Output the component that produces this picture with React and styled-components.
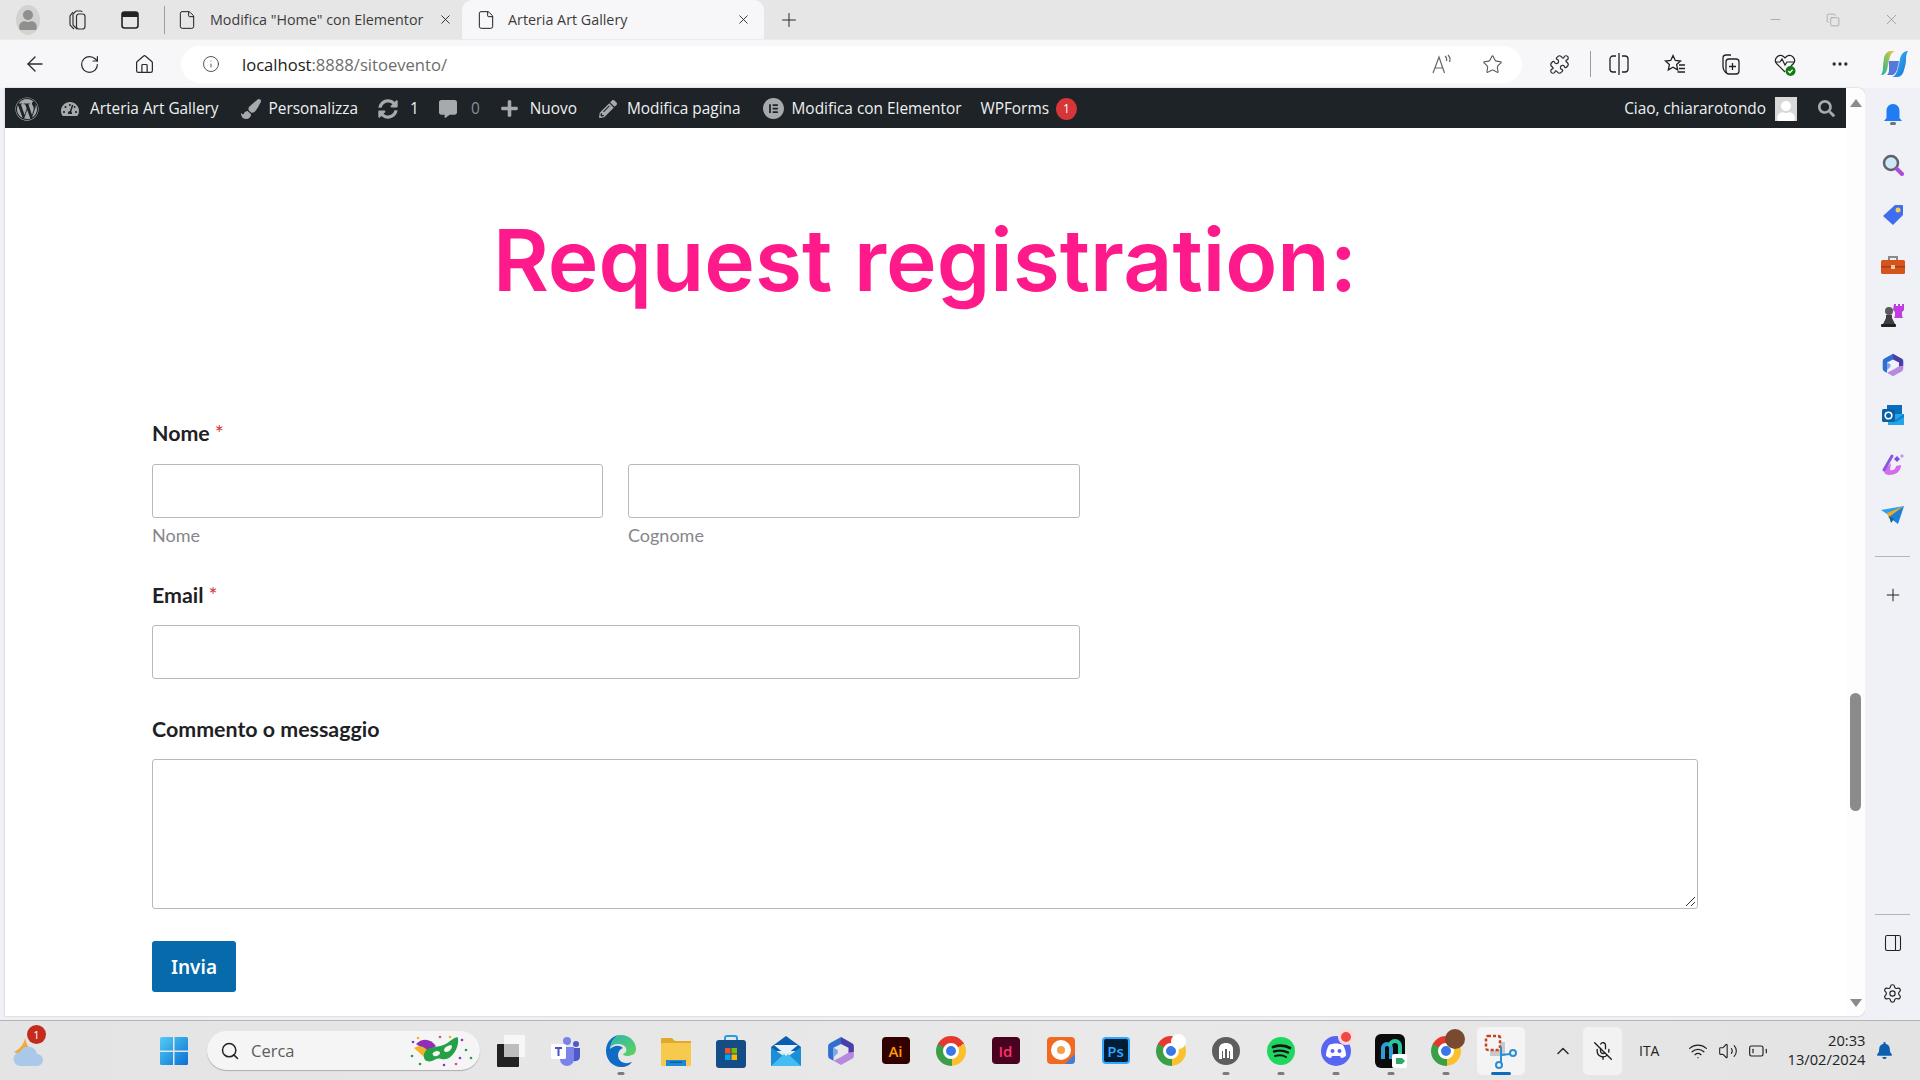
import React from "react";
import styled, { createGlobalStyle } from "styled-components";
import {
  ArrowLeft,
  RotateCw,
  House,
  Info,
  Star,
  Puzzle,
  Plus,
  X,
  File,
  Copy,
  PanelRight,
  Minus,
  Settings,
  MoreHorizontal,
  Search,
  ChevronUp,
  MicOff,
  Wifi,
  Volume2,
  BatteryLow,
} from "lucide-react";
import {
  FaWordpress,
  FaTachometerAlt,
  FaPaintBrush,
  FaSyncAlt,
  FaCommentAlt,
  FaPlus,
  FaPencilAlt,
  FaSearch,
  FaUser,
  FaBell,
} from "react-icons/fa";
import { SiElementor } from "react-icons/si";

const GlobalStyle = createGlobalStyle`
  html, body {
    margin: 0;
    height: 100%;
    overflow: hidden;
    background: #f0f1f6;
  }
`;

const Shell = styled.div`
  width: 1920px;
  height: 1080px;
  display: flex;
  flex-direction: column;
  font-family: "Open Sans", "Liberation Sans", sans-serif;
  color: #1f1f1f;
`;

const TabStrip = styled.div`
  height: 39px;
  flex: none;
  display: flex;
  align-items: center;
  padding-left: 8px;
  background: #e6e6e6;
`;

const Slot = styled.div`
  width: ${(p) => p.$w || 55}px;
  height: 100%;
  flex: none;
  display: flex;
  align-items: center;
  justify-content: center;
  color: ${(p) => p.$color || "#2b2b2b"};
`;

const WindowControls = styled.div`
  margin-left: auto;
  height: 100%;
  display: flex;
`;

const Avatar = styled.div`
  width: 24px;
  height: 30px;
  border-radius: 50%;
  background: #d2d2d0;
  display: flex;
  align-items: center;
  justify-content: center;
  color: #8f8f8d;
  overflow: hidden;
`;

const Sep = styled.div`
  width: 1px;
  height: ${(p) => p.$h || 28}px;
  background: #9c9c9c;
  flex: none;
  margin-left: ${(p) => p.$ml || 0}px;
`;

const Tab = styled.div`
  width: ${(p) => p.$w}px;
  height: 39px;
  flex: none;
  display: flex;
  align-items: center;
  box-sizing: border-box;
  padding: 0 ${(p) => p.$pr}px 0 ${(p) => p.$pl}px;
  gap: ${(p) => p.$gap}px;
  background: ${(p) => (p.$active ? "#f7f7f9" : "transparent")};
  border-radius: ${(p) => (p.$active ? "10px 10px 0 0" : "0")};

  svg {
    flex: none;
  }
`;

const TabTitle = styled.span`
  font-size: 14.3px;
  white-space: nowrap;
  color: #3c3c3c;
`;

const TabClose = styled.span`
  margin-left: auto;
  display: flex;
`;

const Toolbar = styled.div`
  height: 49px;
  flex: none;
  display: flex;
  align-items: center;
  padding-left: 7px;
  box-sizing: border-box;
  background: #f7f7f9;
  border-top: 1px solid #ececec;
`;

const AddressBar = styled.div`
  width: 1341px;
  height: 37px;
  flex: none;
  margin: 0 10px 0 9px;
  padding: 0 5px 0 21px;
  box-sizing: border-box;
  display: flex;
  align-items: center;
  border-radius: 19px;
  background: #fff;
`;

const Url = styled.span`
  font-size: 16.6px;
  color: #1b1b1b;
  flex: 1;
  margin-left: 22px;

  span {
    color: #6d6d6d;
  }
`;

const AddressAction = styled.div`
  width: 50px;
  display: flex;
  justify-content: center;
  color: #555;
`;

const Body = styled.div`
  flex: 1;
  min-height: 0;
  display: flex;
  background: #f0f1f6;
  padding-left: 5px;
`;

const Page = styled.div`
  width: 1860px;
  height: 928px;
  flex: none;
  display: flex;
  background: #fff;
  border-radius: 0 8px 8px 0;
  box-shadow: 0 0 2px rgba(0, 0, 0, 0.25);
  overflow: hidden;
`;

const PageColumn = styled.div`
  width: 1841px;
  flex: none;
  display: flex;
  flex-direction: column;
`;

const AdminBar = styled.div`
  height: 40px;
  flex: none;
  display: flex;
  align-items: center;
  box-sizing: border-box;
  padding: 1px 0 0 10px;
  background: #1d2327;
  color: #f0f0f1;
  font-size: 15.4px;
  white-space: nowrap;
`;

const AdminItem = styled.div`
  display: flex;
  align-items: center;
  gap: ${(p) => p.$gap || 10}px;
  margin-left: ${(p) => p.$ml || 0}px;

  svg {
    color: #a7aaad;
    flex: none;
  }
`;

const Muted = styled.span`
  color: #8c8f94;
`;

const AdminBadge = styled.span`
  width: 21px;
  height: 22px;
  border-radius: 50%;
  background: #d63638;
  color: #fff;
  font-size: 12px;
  display: flex;
  align-items: center;
  justify-content: center;
`;

const UserBox = styled.div`
  width: 22px;
  height: 24px;
  background: #d8d8d8;
  display: flex;
  align-items: flex-end;
  justify-content: center;
  overflow: hidden;

  svg {
    color: #fff;
  }
`;

const AdminRight = styled.div`
  margin-left: auto;
  display: flex;
  align-items: center;
  height: 100%;
  gap: 9px;
`;

const Content = styled.main`
  flex: 1;
  padding: 78px 148px 0 147px;
  font-family: Lato, "Liberation Sans", sans-serif;
`;

const Title = styled.h1`
  margin: 0 0 106px;
  text-align: center;
  font-family: Inter, "Noto Sans", sans-serif;
  font-size: 85.7px;
  line-height: 109px;
  font-weight: 600;
  color: #ff1a8c;
`;

const Field = styled.div`
  width: ${(p) => p.$w || 928}px;
  margin-bottom: ${(p) => p.$mb || 0}px;
`;

const Label = styled.div`
  font-size: 21.4px;
  line-height: 24px;
  font-weight: 700;
  color: #1f1f26;
  margin-bottom: 18px;

  em {
    font-style: normal;
    font-weight: 400;
    color: #d63637;
    margin-left: 5px;
  }
`;

const NameRow = styled.div`
  display: grid;
  grid-template-columns: 451px 452px;
  gap: 25px;
  margin-top: 19px;
`;

const TextInput = styled.div`
  height: 54px;
  box-sizing: border-box;
  border: 1px solid #b9b9b9;
  border-radius: 3px;
  background: #fff;
`;

const Sublabel = styled.div`
  font-size: 18px;
  line-height: 22px;
  margin-top: 6px;
  color: #86868c;
`;

const TextArea = styled.div`
  position: relative;
  height: 150px;
  box-sizing: border-box;
  border: 1px solid #b9b9b9;
  border-radius: 3px;
  margin-bottom: 32px;
`;

const Grip = styled.svg`
  position: absolute;
  right: 1px;
  bottom: 1px;
`;

const SubmitButton = styled.button`
  width: 84px;
  height: 51px;
  border: none;
  border-radius: 3px;
  background: #066aab;
  color: #fff;
  font-family: "Noto Sans", Lato, sans-serif;
  font-size: 19px;
  font-weight: 600;
  padding: 0;
`;

const Scrollbar = styled.div`
  width: 19px;
  flex: none;
  display: flex;
  flex-direction: column;
  align-items: center;
  background: #fdfdfe;
  padding: 11px 0 0 0;
`;

const Arrow = styled.div`
  width: 0;
  height: 0;
  border-left: 6px solid transparent;
  border-right: 6px solid transparent;
  ${(p) =>
    p.$down
      ? "border-top: 8px solid #8b8b8b; margin-top: 188px;"
      : "border-bottom: 8px solid #8b8b8b;"}
`;

const Thumb = styled.div`
  width: 11px;
  height: 118px;
  border-radius: 6px;
  background: #8b8b8b;
  margin-top: 586px;
`;

const Sidebar = styled.aside`
  width: 55px;
  height: 930px;
  flex: none;
  display: flex;
  flex-direction: column;
  align-items: center;
  padding-top: 2px;
  box-sizing: border-box;
  background: #f0f1f6;
`;

const SideSlot = styled.div`
  height: 50px;
  flex: none;
  display: flex;
  align-items: center;
  justify-content: center;
  color: #222;
`;

const SideRule = styled.div`
  width: 35px;
  height: 1px;
  flex: none;
  background: #b5b5b8;
  margin: ${(p) => p.$m};
`;

const Taskbar = styled.footer`
  height: 60px;
  flex: none;
  margin-top: auto;
  display: flex;
  align-items: center;
  box-sizing: border-box;
  border-top: 1px solid #b4b4b4;
  background: linear-gradient(90deg, #e4e4e4, #e9e9e9 60%, #e3e3e3);
`;

const TaskSlot = styled.div`
  position: relative;
  width: ${(p) => p.$w || 55}px;
  height: 59px;
  flex: none;
  display: flex;
  align-items: center;
  justify-content: center;
  margin-left: ${(p) => p.$ml || 0}px;
`;

const RunDot = styled.span`
  position: absolute;
  left: 50%;
  bottom: 5px;
  width: ${(p) => (p.$active ? 20 : 7)}px;
  height: 3px;
  border-radius: 2px;
  transform: translateX(-50%);
  background: ${(p) => (p.$active ? "#0f6cbd" : "#7c7c7c")};
`;

const SearchBox = styled.div`
  width: 273px;
  height: 39px;
  flex: none;
  margin-left: 6px;
  box-sizing: border-box;
  padding: 0 6px 0 13px;
  display: flex;
  align-items: center;
  gap: 11px;
  border-radius: 20px;
  background: #f5f5f5;
  box-shadow: 0 1px 1px rgba(0, 0, 0, 0.25);
  font-size: 16.5px;
  color: #5c5c5c;

  svg:last-child {
    margin-left: auto;
  }
`;

const LetterTile = styled.div`
  position: relative;
  width: 28px;
  height: 27px;
  border-radius: 4px;
  background: ${(p) => p.$bg};
  color: ${(p) => p.$fg};
  border: ${(p) => (p.$edge ? `2px solid ${p.$fg}` : "none")};
  box-sizing: border-box;
  display: flex;
  align-items: center;
  justify-content: center;
  font-family: "Open Sans", sans-serif;
  font-size: 15px;
  font-weight: 600;
`;

const ChromeRing = styled.div`
  position: relative;
  width: 30px;
  height: 30px;
  border-radius: 50%;
  background: conic-gradient(from -62deg, #e5392f 0 122deg, #fbc02d 122deg 238deg, #3c9e47 238deg 360deg);
  display: flex;
  align-items: center;
  justify-content: center;

  &::after {
    content: "";
    width: 10px;
    height: 10px;
    border: 3px solid #fff;
    border-radius: 50%;
    background: #3b78e7;
  }
`;

const CornerBadge = styled.span`
  position: absolute;
  top: ${(p) => p.$top}px;
  left: ${(p) => p.$left}px;
  width: ${(p) => p.$size}px;
  height: ${(p) => p.$size}px;
  border-radius: 50%;
  background: ${(p) => p.$bg};
  border: ${(p) => p.$border || "none"};
  box-sizing: border-box;
  color: #fff;
  font-size: 11px;
  display: flex;
  align-items: center;
  justify-content: center;
`;

const SnipHighlight = styled.div`
  width: 48px;
  height: 48px;
  border-radius: 5px;
  background: #f4f4f4;
  display: flex;
  align-items: center;
  justify-content: center;
`;

const Tray = styled.div`
  flex: 1;
  display: flex;
  align-items: center;
  height: 100%;
  padding-left: 20px;
`;

const MicBox = styled.div`
  width: 39px;
  height: 48px;
  margin-left: 5px;
  border-radius: 5px;
  background: #f2f2f2;
  display: flex;
  align-items: center;
  justify-content: center;
  color: #1c1c1c;
`;

const TrayText = styled.span`
  font-size: 14px;
  color: #222;
  margin-left: ${(p) => p.$ml}px;
`;

const Clock = styled.div`
  width: 86px;
  margin-left: 11px;
  text-align: right;
  font-size: 14.7px;
  line-height: 19px;
  color: #222;
  transform: translateY(-1px);
`;

const TrayIcons = styled.div`
  display: flex;
  align-items: center;
  gap: 10px;
  margin-left: 29px;
  color: #222;
`;

/* ---- drawn app icons ---- */

const WorkspacesIcon = () => (
  <svg width="22" height="22" viewBox="0 0 22 22" fill="none" stroke="#333" strokeWidth="1.200">
    <path d="M8 20 5 17a2 2 0 0 1-1-2V7l3-4" />
    <path d="M11 20 8 17a2 2 0 0 1-1-2V5l3-3h5a1 1 0 0 1 1 1" />
    <rect x="10.500" y="5" width="8.500" height="15" rx="2.500" />
  </svg>
);

const VerticalTabsIcon = () => (
  <svg width="20" height="20" viewBox="0 0 20 20">
    <rect x="2" y="2" width="16" height="16" rx="2.500" fill="none" stroke="#222" strokeWidth="1.600" />
    <path fill="#222" d="M2 4.500A2.500 2.500 0 0 1 4.500 2h11A2.500 2.500 0 0 1 18 4.500V7H2z" />
  </svg>
);

const SplitIcon = () => (
  <svg width="22" height="24" viewBox="0 0 22 24" fill="none" stroke="#222" strokeWidth="1.300">
    <path d="M11 1v22" />
    <path d="M8 4H5a3 3 0 0 0-3 3v10a3 3 0 0 0 3 3h3M14 4h3a3 3 0 0 1 3 3v10a3 3 0 0 1-3 3h-3" />
  </svg>
);

const WindowsLogo = () => (
  <svg width="30" height="30" viewBox="0 0 30 30">
    <defs>
      <linearGradient id="win" x1="0" y1="0" x2="1" y2="1">
        <stop offset="0" stopColor="#53cdf7" />
        <stop offset="1" stopColor="#0a6fd0" />
      </linearGradient>
    </defs>
    <path fill="url(#win)" d="M1 2.500A1.500 1.500 0 0 1 2.500 1H14v13.500H1zM15.500 1H27.500A1.500 1.500 0 0 1 29 2.500V14.500H15.500zM1 16H14v13H2.500A1.500 1.500 0 0 1 1 27.500zM15.500 16H29V27.500A1.500 1.500 0 0 1 27.500 29H15.500z" />
  </svg>
);

const WidgetsCloud = () => (
  <svg width="32" height="34" viewBox="0 0 32 34">
    <path fill="#f2a93b" d="M13 4c-1 6-5 11-11 14 4 3 13 3 17-2-3-3-5-7-6-12z" />
    <path fill="#a9c8ea" d="M9 32a7 7 0 0 1-1-14 9 9 0 0 1 17 2 6 6 0 0 1 0 12z" />
  </svg>
);

const MaskIcon = () => (
  <svg width="64" height="34" viewBox="0 0 64 34">
    <path fill="#8e2fb5" d="M6 10c6-6 14-6 20 2l-8 6z" />
    <path fill="#f0b429" d="M4 14c5-3 10-2 14 3l-4 6z" />
    <path fill="#24a146" d="M15 26c-3-5 0-11 6-12 8-2 13-2 19-7 4-3 8-5 8-3 1 8-3 16-9 20-6 3-9-1-13 1-4 3-9 3-11 1z" />
    <path fill="#f5f5f5" d="M24 18c3-2 6-1 6 1s-4 4-6 3-2-3 0-4zM36 13c3-2 6-2 6-1 0 3-3 6-6 6s-2-4 0-5z" />
    {[[3, 8, "#7d3cc4"], [2, 22, "#24a146"], [10, 30, "#24a146"], [30, 3, "#e14b8a"], [40, 3, "#f0b429"], [52, 6, "#7d3cc4"], [56, 16, "#24a146"], [50, 24, "#7d3cc4"], [46, 30, "#e14b8a"], [61, 24, "#24a146"], [34, 31, "#7d3cc4"], [8, 4, "#f0b429"]].map(
      ([x, y, c]) => <circle key={`${x}-${y}`} cx={x} cy={y} r="1.300" fill={c} />
    )}
  </svg>
);

const TaskViewIcon = () => (
  <svg width="30" height="34" viewBox="0 0 30 34">
    <rect x="8" y="1" width="21" height="22" fill="#f7f7f7" />
    <rect x="1" y="10" width="22" height="23" rx="1" fill="#222" />
    <rect x="8" y="10" width="15" height="13" fill="#bdbdbd" />
  </svg>
);

const TeamsIcon = () => (
  <svg width="32" height="30" viewBox="0 0 32 30">
    <circle cx="17" cy="5" r="4" fill="#7b83eb" />
    <circle cx="26" cy="8" r="3" fill="#5059c9" />
    <path fill="#5059c9" d="M21 12h9v9a5 5 0 0 1-9 2z" />
    <path fill="#7b83eb" d="M10 11h14v12a7 7 0 0 1-14 0z" />
    <rect x="1" y="8" width="15" height="15" rx="1.500" fill="#fff" />
    <path fill="#4b53bc" d="M5 11h7v2H9.500v7h-2v-7H5z" />
  </svg>
);

const EdgeIcon = () => (
  <svg width="32" height="34" viewBox="0 0 32 34">
    <defs>
      <linearGradient id="edgeTop" x1="0" y1="0" x2="1" y2="1">
        <stop offset="0" stopColor="#2fb5b0" />
        <stop offset="1" stopColor="#5fd35a" />
      </linearGradient>
    </defs>
    <path fill="#0f6bc4" d="M16 1C7 1 1 8 1 17c0 9 7 16 15 16 5 0 9-2 11-5-7 3-14 0-14-7 0-3 2-6 5-7C14 10 8 12 5 15 6 7 11 1 16 1z" />
    <path fill="url(#edgeTop)" d="M16 1c9 0 15 7 15 14 0 5-4 7-9 7-2 0-4-1-4-2 3-1 4-3 3-6-2-4-8-5-13-3-2 1-3 3-3 4C6 7 10 1 16 1z" />
  </svg>
);

const FolderIcon = () => (
  <svg width="30" height="30" viewBox="0 0 30 30">
    <path fill="#e0a92a" d="M0 3a1 1 0 0 1 1-1h10l3 3h16v6H0z" />
    <rect y="7" width="30" height="23" rx="1" fill="#f7ca4d" />
    <rect x="5" y="24" width="20" height="6" fill="#1e88d6" />
    <rect x="9" y="25.500" width="12" height="1.500" fill="#0a5aa0" />
  </svg>
);

const StoreIcon = () => (
  <svg width="30" height="34" viewBox="0 0 30 34">
    <path fill="none" stroke="#2b9be0" strokeWidth="2" d="M9 9V4a2 2 0 0 1 2-2h8a2 2 0 0 1 2 2v5" />
    <rect y="6" width="30" height="28" rx="3" fill="#144c86" />
    <rect x="9" y="14" width="5.500" height="5.500" fill="#f25022" />
    <rect x="15.500" y="14" width="5.500" height="5.500" fill="#7fba00" />
    <rect x="9" y="20.500" width="5.500" height="5.500" fill="#00a4ef" />
    <rect x="15.500" y="20.500" width="5.500" height="5.500" fill="#ffb900" />
  </svg>
);

const MailIcon = () => (
  <svg width="30" height="30" viewBox="0 0 30 30">
    <path fill="#0c5fb0" d="M0 11 15 0l15 11v4H0z" />
    <path fill="#e8f3fb" d="M3 9h24L15 19z" />
    <path fill="#1b8fd6" d="M0 11l15 11 15-11v19H0z" />
    <path fill="#45bdf0" d="M0 30 13 18l2 2 2-2 13 12z" />
  </svg>
);

const M365Icon = ({ size = 28 }) => (
  <svg width={size} height={size} viewBox="0 0 28 28">
    <path fill="#2f6fd1" d="M14 1 4 6.500a3 3 0 0 0-2 3v9a3 3 0 0 0 2 3l3 1.500V11l7-3.500z" />
    <path fill="#4a3fa6" d="M14 1l10 5.500a3 3 0 0 1 2 3V15l-5 2.500V11l-7-3.500z" />
    <path fill="#b889e0" d="M26 15v3.500a3 3 0 0 1-2 3L14 27l-7-4 7-3.500 7-4z" />
    <path fill="#7fa7e8" d="M7 11l4 2v3l-4 4z" />
  </svg>
);

const DiscIcon = () => (
  <svg width="28" height="27" viewBox="0 0 28 27">
    <circle cx="14" cy="13" r="10" fill="#fff" />
    <circle cx="14" cy="13" r="4" fill="#f5a04a" />
    <path fill="#3f7fd8" d="M28 17v6a4 4 0 0 1-4 4h-6z" />
  </svg>
);

const ElephantIcon = () => (
  <svg width="28" height="30" viewBox="0 0 28 30">
    <circle cx="14" cy="15" r="14" fill="#5e5e5e" />
    <path fill="#fff" d="M7 23V13c0-4 3-6 7-6s7 2 7 6v10h-3v-8h-1v7h-2V13h-2v9h-2v-7h-1v8z" />
  </svg>
);

const SpotifyIcon = () => (
  <svg width="28" height="30" viewBox="0 0 28 30">
    <circle cx="14" cy="15" r="14" fill="#1ed760" />
    <g fill="none" stroke="#191414" strokeLinecap="round">
      <path strokeWidth="2.800" d="M6 11c6-2 12-1.500 17 1" />
      <path strokeWidth="2.400" d="M7 15.500c5-1.500 10-1 14 1" />
      <path strokeWidth="2" d="M8 20c4-1 8-.8 11 1" />
    </g>
  </svg>
);

const DiscordIcon = () => (
  <svg width="30" height="30" viewBox="0 0 30 30">
    <circle cx="15" cy="15" r="15" fill="#5865f2" />
    <path fill="#fff" d="M8 9c4-2 10-2 14 0 2 3 3 7 3 11-2 1-3 2-5 2l-1-2H11l-1 2c-2 0-3-1-5-2 0-4 1-8 3-11z" />
    <circle cx="11.500" cy="15" r="2" fill="#5865f2" />
    <circle cx="18.500" cy="15" r="2" fill="#5865f2" />
  </svg>
);

const CamIcon = () => (
  <svg width="32" height="34" viewBox="0 0 32 34">
    <rect width="30" height="34" rx="6" fill="#0b0b0b" />
    <path fill="none" stroke="#2a9dd8" strokeWidth="4" d="M8 25V14a4 4 0 0 1 8 0v11" />
    <path fill="none" stroke="#27c8a0" strokeWidth="4" d="M15 12a5 5 0 0 1 10 0v8" />
    <rect x="17" y="20" width="15" height="14" rx="2" fill="#fff" />
    <path fill="#2fa86a" d="M21 24h6l3 3-3 3h-6z" />
  </svg>
);

const SnipIcon = () => (
  <svg width="34" height="36" viewBox="0 0 34 36">
    <rect x="6" y="9" width="15" height="14" fill="#c9c9c9" />
    <rect x="2" y="3" width="14" height="14" rx="2" fill="#f4f4f4" stroke="#c8431d" strokeWidth="2.500" strokeDasharray="3 2" />
    <path fill="none" stroke="#2a8ed6" strokeWidth="2" d="M17 14v15M17 22l9-1" />
    <circle cx="15" cy="32" r="3" fill="none" stroke="#2a8ed6" strokeWidth="2" />
    <circle cx="29" cy="20" r="3" fill="none" stroke="#2a8ed6" strokeWidth="2" />
  </svg>
);

const CopilotIcon = () => (
  <svg width="30" height="30" viewBox="0 0 30 30">
    <defs>
      <linearGradient id="copA" x1="0" y1="0" x2="1" y2="1">
        <stop offset="0" stopColor="#35c1f1" />
        <stop offset="1" stopColor="#1b6ce0" />
      </linearGradient>
      <linearGradient id="copB" x1="0" y1="1" x2="1" y2="0">
        <stop offset="0" stopColor="#16b49a" />
        <stop offset="1" stopColor="#f0c93a" />
      </linearGradient>
    </defs>
    <path fill="url(#copB)" d="M5 9c1-4 3-7 7-7h4c-3 1-5 4-6 9l-2 10c-1 3-3 5-6 5 2-3 2-6 2-9z" />
    <path fill="url(#copA)" d="M25 21c-1 4-3 7-7 7h-5c3-1 5-4 6-9l2-9c1-4 3-8 8-8-2 3-2 6-2 9 0 3-1 7-2 10z" />
    <path fill="#1e4fd0" d="M10 12h10l-2 9c-1 2-2 4-4 5h-6c2-2 2-4 2-6z" opacity="0.75" />
  </svg>
);

const HeartPulse = () => (
  <svg width="24" height="26" viewBox="0 0 24 26">
    <path fill="none" stroke="#222" strokeWidth="1.200" d="M12 21 3.500 12.500a5 5 0 0 1 7-7L12 7l1.500-1.500a5 5 0 0 1 7 7L18 15" />
    <path fill="none" stroke="#222" strokeWidth="1.200" d="M2 11h5l2-3 3 6 2-3h7" />
    <circle cx="17.500" cy="20" r="5" fill="#107c10" />
    <path fill="none" stroke="#fff" strokeWidth="1.400" d="M15.300 20l1.600 1.700 2.700-3" />
  </svg>
);

const FavoritesIcon = () => (
  <svg width="24" height="24" viewBox="0 0 24 24" fill="none" stroke="#222" strokeWidth="1.300">
    <path d="M10 3.500l2.300 5 5.200.6-3.900 3.500 1.100 5.300-4.700-2.700-4.700 2.700 1.100-5.300L2.500 9.100l5.200-.6z" />
    <path d="M16 13h6M16 16.500h6M14.500 20h7.500" />
  </svg>
);

const CollectionsIcon = () => (
  <svg width="24" height="24" viewBox="0 0 24 24" fill="none" stroke="#222" strokeWidth="1.300">
    <path d="M8 21c-2-2-3-4-3-6V6a3 3 0 0 1 3-3h5" />
    <rect x="8" y="7" width="13" height="15" rx="3" />
    <path d="M14.500 11v7M11 14.500h7" />
  </svg>
);

const ReadAloudIcon = () => (
  <svg width="22" height="22" viewBox="0 0 22 22" fill="none" stroke="#666" strokeWidth="1.200">
    <path d="M2 20 8 4l5.500 16M4 15h8" />
    <path d="M14 3c1.500 1 2 2.500 1.500 5M17 2c2 2 2.500 4.500 1.500 7" />
  </svg>
);

const SideBell = () => (
  <svg width="20" height="22" viewBox="0 0 20 22">
    <path fill="#1f7cf2" d="M10 0c4 0 6.500 3 6.500 7v7l2.500 3H1l2.500-3V7C3.500 3 6 0 10 0z" />
    <rect x="7" y="18" width="6" height="3" rx="1.500" fill="#6b7280" />
  </svg>
);

const SideSearch = () => (
  <svg width="22" height="22" viewBox="0 0 22 22">
    <circle cx="9" cy="9" r="7" fill="#cfe7f7" stroke="#5f6368" strokeWidth="2.500" />
    <path stroke="#b04ad8" strokeWidth="4" strokeLinecap="round" d="M15 15l5 5" />
  </svg>
);

const SideTag = () => (
  <svg width="22" height="22" viewBox="0 0 22 22">
    <path fill="#3f6cf0" d="M13 1h7a1 1 0 0 1 1 1v9L11 21 1 12z" />
    <circle cx="16" cy="6" r="2.500" fill="#f4cf57" />
  </svg>
);

const SideTools = () => (
  <svg width="24" height="20" viewBox="0 0 24 20">
    <path fill="none" stroke="#8a8a8a" strokeWidth="2" d="M8 6V2h8v4" />
    <rect y="5" width="24" height="14" rx="1.500" fill="#d6541c" />
    <rect y="11" width="24" height="1.500" fill="#a63c10" />
    <rect x="10" y="10" width="4" height="4" fill="#f1c9a8" />
  </svg>
);

const SideChess = () => (
  <svg width="24" height="24" viewBox="0 0 24 24">
    <path fill="#c03de0" d="M13 1h2v2h2V1h2v2h2V1h2v6l-2 2v4l1 2h-9l1-2V9l-2-2z" />
    <circle cx="8" cy="8" r="4" fill="#5b5b5b" />
    <path fill="#3f3f3f" d="M5 12h6v3l3 6H2l3-6z" />
    <rect y="21" width="15" height="3" rx="1" fill="#222" />
  </svg>
);

const SideOutlook = () => (
  <svg width="22" height="22" viewBox="0 0 22 22">
    <rect x="5" y="1" width="15" height="12" fill="#0a6cbd" />
    <path fill="#22a5e6" d="M6 10h16v11H6z" />
    <path fill="#0d7fd0" d="M6 10l8 6 8-6v3l-8 5-8-5z" />
    <rect y="5" width="13" height="13" rx="1.500" fill="#0a5fa8" />
    <circle cx="6.500" cy="11.500" r="3.300" fill="none" stroke="#fff" strokeWidth="1.600" />
  </svg>
);

const SideDesigner = () => (
  <svg width="24" height="24" viewBox="0 0 24 24">
    <path fill="#d56cf0" d="M10 10l-6 6c-2 3 0 6 4 6 6 0 12-3 12-10l-5 1c0 3-3 5-6 4z" />
    <path stroke="#8a58e0" strokeWidth="3" strokeLinecap="round" d="M3 17 11 3" />
    <path fill="#7b4fe0" d="M16 3l3 3-3 3-3-3z" />
    <path fill="#b79af0" d="M21 1l2 2-2 2-2-2z" />
  </svg>
);

const SideSend = () => (
  <svg width="24" height="18" viewBox="0 0 24 18">
    <path fill="#2aa0f0" d="M0 4 23 0 9 10z" />
    <path fill="#e8a92c" d="M6 7 23 0 8 13z" />
    <path fill="#1c7fd8" d="M8 11 23 0 17 18z" />
    <path fill="#12609f" d="M8 10l2 7 3-4z" />
  </svg>
);

const sideIcons = [SideBell, SideSearch, SideTag, SideTools, SideChess, M365Icon, SideOutlook, SideDesigner, SideSend];

function App() {
  return (
    <Shell>
      <GlobalStyle />
      <TabStrip>
        <Slot $w={40}>
          <Avatar>
            <FaUser size={20} />
          </Avatar>
        </Slot>
        <Slot $w={58}>
          <WorkspacesIcon />
        </Slot>
        <Slot $w={48}>
          <VerticalTabsIcon />
        </Slot>
        <Sep $ml={10} />
        <Tab $w={297} $pl={12} $pr={9} $gap={13}>
          <File size={20} strokeWidth={1.2} />
          <TabTitle>Modifica "Home" con Elementor</TabTitle>
          <TabClose>
            <X size={15} strokeWidth={1.4} />
          </TabClose>
        </Tab>
        <Tab $active $w={302} $pl={14} $pr={13} $gap={12}>
          <File size={20} strokeWidth={1.2} />
          <TabTitle>Arteria Art Gallery</TabTitle>
          <TabClose>
            <X size={15} strokeWidth={1.4} />
          </TabClose>
        </Tab>
        <Slot $w={50}>
          <Plus size={22} strokeWidth={1.1} />
        </Slot>
        <WindowControls>
          <Slot $w={58} $color="#8a8a8a">
            <Minus size={15} strokeWidth={1} />
          </Slot>
          <Slot $w={58} $color="#8a8a8a">
            <Copy size={14} strokeWidth={1} />
          </Slot>
          <Slot $w={58} $color="#8a8a8a">
            <X size={17} strokeWidth={1} />
          </Slot>
        </WindowControls>
      </TabStrip>

      <Toolbar>
        <Slot>
          <ArrowLeft size={24} strokeWidth={1.4} />
        </Slot>
        <Slot>
          <RotateCw size={21} strokeWidth={1.4} />
        </Slot>
        <Slot>
          <House size={21} strokeWidth={1.4} />
        </Slot>
        <AddressBar>
          <Info size={18} strokeWidth={1.2} color="#444" />
          <Url>
            localhost<span>:8888/sitoevento/</span>
          </Url>
          <AddressAction>
            <ReadAloudIcon />
          </AddressAction>
          <AddressAction>
            <Star size={21} strokeWidth={1.2} />
          </AddressAction>
        </AddressBar>
        <Slot $w={54}>
          <Puzzle size={21} strokeWidth={1.4} />
        </Slot>
        <Sep $ml={4} $h={26} />
        <Slot $w={56}>
          <SplitIcon />
        </Slot>
        <Slot>
          <FavoritesIcon />
        </Slot>
        <Slot>
          <CollectionsIcon />
        </Slot>
        <Slot>
          <HeartPulse />
        </Slot>
        <Slot>
          <MoreHorizontal size={20} strokeWidth={2} />
        </Slot>
        <Slot $w={53}>
          <CopilotIcon />
        </Slot>
      </Toolbar>

      <Body>
        <Page>
          <PageColumn>
            <AdminBar>
              <AdminItem>
                <FaWordpress size={24} />
              </AdminItem>
              <AdminItem $ml={22} $gap={11}>
                <FaTachometerAlt size={18} />
                Arteria Art Gallery
              </AdminItem>
              <AdminItem $ml={22} $gap={8}>
                <FaPaintBrush size={20} />
                Personalizza
              </AdminItem>
              <AdminItem $ml={20} $gap={12}>
                <FaSyncAlt size={20} />1
              </AdminItem>
              <AdminItem $ml={20} $gap={14}>
                <FaCommentAlt size={18} />
                <Muted>0</Muted>
              </AdminItem>
              <AdminItem $ml={20} $gap={11}>
                <FaPlus size={19} />
                Nuovo
              </AdminItem>
              <AdminItem $ml={22} $gap={10}>
                <FaPencilAlt size={18} />
                Modifica pagina
              </AdminItem>
              <AdminItem $ml={22} $gap={8}>
                <SiElementor size={21} />
                Modifica con Elementor
              </AdminItem>
              <AdminItem $ml={19} $gap={7}>
                WPForms
                <AdminBadge>1</AdminBadge>
              </AdminItem>
              <AdminRight>
                Ciao, chiararotondo
                <UserBox>
                  <FaUser size={20} />
                </UserBox>
                <Slot $w={40} $color="#a7aaad">
                  <FaSearch size={17} />
                </Slot>
              </AdminRight>
            </AdminBar>
            <Content>
              <Title>Request registration:</Title>
              <Field $mb={37}>
                <Label>
                  Nome<em>*</em>
                </Label>
                <NameRow>
                  <div>
                    <TextInput />
                    <Sublabel>Nome</Sublabel>
                  </div>
                  <div>
                    <TextInput />
                    <Sublabel>Cognome</Sublabel>
                  </div>
                </NameRow>
              </Field>
              <Field $mb={38}>
                <Label>
                  Email<em>*</em>
                </Label>
                <TextInput />
              </Field>
              <Field $w={1546}>
                <Label>Commento o messaggio</Label>
                <TextArea>
                  <Grip width="12" height="12" viewBox="0 0 12 12">
                    <path stroke="#333" strokeWidth="1" d="M2 11 11 2M7 11l4-4" />
                  </Grip>
                </TextArea>
              </Field>
              <SubmitButton type="button">Invia</SubmitButton>
            </Content>
          </PageColumn>
          <Scrollbar>
            <Arrow />
            <Thumb />
            <Arrow $down />
          </Scrollbar>
        </Page>
        <Sidebar>
          {sideIcons.map((Icon, i) => (
            <SideSlot key={i}>
              <Icon size={24} />
            </SideSlot>
          ))}
          <SideRule $m="16px 0 13px" />
          <SideSlot>
            <Plus size={20} strokeWidth={1.2} />
          </SideSlot>
          <SideRule $m="auto 0 3px" />
          <SideSlot>
            <PanelRight size={20} strokeWidth={1.3} />
          </SideSlot>
          <SideSlot>
            <Settings size={21} strokeWidth={1.3} />
          </SideSlot>
        </Sidebar>
      </Body>

      <Taskbar>
        <TaskSlot $w={56}>
          <WidgetsCloud />
          <CornerBadge $top={4} $left={27} $size={19} $bg="#c42b1c">1</CornerBadge>
        </TaskSlot>
        <TaskSlot $ml={90}>
          <WindowsLogo />
        </TaskSlot>
        <SearchBox>
          <Search size={20} strokeWidth={1.8} color="#222" />
          Cerca
          <MaskIcon />
        </SearchBox>
        <TaskSlot $ml={3}>
          <TaskViewIcon />
        </TaskSlot>
        <TaskSlot>
          <TeamsIcon />
        </TaskSlot>
        <TaskSlot>
          <EdgeIcon />
          <RunDot />
        </TaskSlot>
        <TaskSlot>
          <FolderIcon />
        </TaskSlot>
        <TaskSlot>
          <StoreIcon />
        </TaskSlot>
        <TaskSlot>
          <MailIcon />
        </TaskSlot>
        <TaskSlot>
          <M365Icon size={30} />
        </TaskSlot>
        <TaskSlot>
          <LetterTile $bg="#330000" $fg="#ff9a00">Ai</LetterTile>
        </TaskSlot>
        <TaskSlot>
          <ChromeRing />
        </TaskSlot>
        <TaskSlot>
          <LetterTile $bg="#49021f" $fg="#ff3366">Id</LetterTile>
        </TaskSlot>
        <TaskSlot>
          <LetterTile $bg="#f26a21" $fg="#f26a21">
            <DiscIcon />
          </LetterTile>
        </TaskSlot>
        <TaskSlot>
          <LetterTile $bg="#001e36" $fg="#31a8ff" $edge>Ps</LetterTile>
        </TaskSlot>
        <TaskSlot>
          <ChromeRing />
          <CornerBadge $top={13} $left={28} $size={15} $bg="#fff" />
        </TaskSlot>
        <TaskSlot>
          <ElephantIcon />
          <RunDot />
        </TaskSlot>
        <TaskSlot>
          <SpotifyIcon />
          <RunDot />
        </TaskSlot>
        <TaskSlot>
          <DiscordIcon />
          <CornerBadge $top={8} $left={30} $size={16} $bg="#f04747" $border="3px solid #fbdada" />
          <RunDot />
        </TaskSlot>
        <TaskSlot>
          <CamIcon />
          <RunDot />
        </TaskSlot>
        <TaskSlot>
          <ChromeRing />
          <CornerBadge $top={8} $left={27} $size={20} $bg="#7a4a30" />
          <RunDot />
        </TaskSlot>
        <TaskSlot>
          <SnipHighlight>
            <SnipIcon />
          </SnipHighlight>
          <RunDot $active />
        </TaskSlot>
        <Tray>
          <Slot $w={30}>
            <ChevronUp size={20} strokeWidth={1.8} />
          </Slot>
          <MicBox>
            <MicOff size={20} strokeWidth={1.6} />
          </MicBox>
          <TrayText $ml={17}>ITA</TrayText>
          <TrayIcons>
            <Wifi size={20} strokeWidth={1.5} />
            <Volume2 size={20} strokeWidth={1.3} />
            <BatteryLow size={20} strokeWidth={1.4} />
          </TrayIcons>
          <Clock>
            20:33
            <br />
            13/02/2024
          </Clock>
          <Slot $w={38} $color="#0f5fb0">
            <FaBell size={17} />
          </Slot>
        </Tray>
      </Taskbar>
    </Shell>
  );
}

export default App;
